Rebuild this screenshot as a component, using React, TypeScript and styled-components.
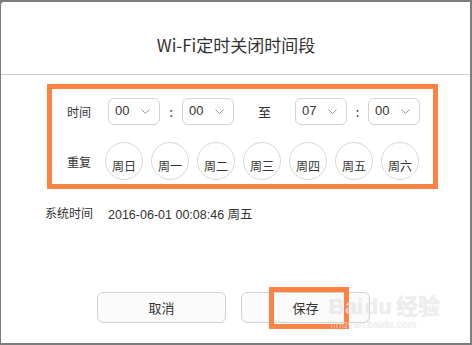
import React from 'react'
import styled, { createGlobalStyle } from 'styled-components'

const GlobalStyle = createGlobalStyle`
  html, body {
    margin: 0;
    padding: 0;
    background: #7d7d7d;
  }
  body {
    font-family: "Liberation Sans", "Noto Sans CJK SC", sans-serif;
    color: #333;
  }
`

const days = ['周日', '周一', '周二', '周三', '周四', '周五', '周六']

const Chevron = () => (
  <svg width="9" height="5" viewBox="0 0 9 5">
    <path d="M0.5 0.5 L4.5 4.5 L8.5 0.5" fill="none" stroke="#9a9a9a" strokeWidth="1" />
  </svg>
)

const TimeSelect: React.FC<{ value: string }> = ({ value }) => (
  <SelectBox>
    <span>{value}</span>
    <Chevron />
  </SelectBox>
)

export default function App() {
  return (
    <>
      <GlobalStyle />
      <Dialog>
        <Header>
          <Title>Wi-Fi定时关闭时间段</Title>
        </Header>
        <Body>
          <Highlight>
            <Row>
              <Label>时间</Label>
              <TimeSelect value="00" />
              <Sep width={22}>:</Sep>
              <TimeSelect value="00" />
              <Sep width={61}>至</Sep>
              <TimeSelect value="07" />
              <Sep width={21}>:</Sep>
              <TimeSelect value="00" />
            </Row>
            <DayRow>
              <Label $w={38}>重复</Label>
              {days.map((d) => (
                <DayCircle key={d}>{d}</DayCircle>
              ))}
            </DayRow>
          </Highlight>
          <SystemTime>
            <span>系统时间</span>
            <TimeValue>2016-06-01 00:08:46 周五</TimeValue>
          </SystemTime>
          <Buttons>
            <Button>取消</Button>
            <Button>
              保存
              <Mark />
            </Button>
          </Buttons>
          <Watermark>
            <WmTop>Bai<WmDu>du</WmDu>经验</WmTop>
            <WmSub>jingyan.baidu.com</WmSub>
          </Watermark>
        </Body>
      </Dialog>
    </>
  )
}

const Dialog = styled.div`
  margin: 2px 2px 0 1px;
  height: 341px;
  background: #fff;
  border-top-left-radius: 3px;
  display: flex;
  flex-direction: column;
  font-family: "Noto Sans CJK SC", sans-serif;
`

const Header = styled.div`
  height: 73px;
  border-bottom: 1px solid #cfcfcf;
  display: flex;
  justify-content: center;
  align-items: flex-start;
  box-sizing: border-box;
`

const Title = styled.div`
  font-size: 17px;
  margin-top: 30px;
  color: #333;
  margin-left: 1px;
`

const Body = styled.div`
  position: relative;
  flex: 1;
  display: flex;
  flex-direction: column;
`

const Highlight = styled.div`
  margin: 9px 0 0 46px;
  width: 391px;
  height: 105px;
  box-sizing: border-box;
  border: 5px solid #fe8244;
  padding: 9px 0 0 15px;
  display: flex;
  flex-direction: column;
  gap: 17px;
`

const Row = styled.div`
  display: flex;
  align-items: center;
  height: 27px;
`

const DayRow = styled.div`
  display: flex;
  align-items: center;
  gap: 8px;
`

const Label = styled.div<{ $w?: number }>`
  width: ${(p) => (p.$w ? p.$w - 8 : 41)}px;
  font-size: 12px;
  color: #333;
  flex-shrink: 0;
`

const SelectBox = styled.div`
  width: 52px;
  height: 27px;
  box-sizing: border-box;
  border: 1px solid #d4d4d4;
  border-radius: 6px;
  display: flex;
  align-items: center;
  justify-content: space-between;
  padding: 0 9px 0 6px;
  font-family: "Liberation Sans", sans-serif;
  font-size: 13px;
  color: #333;
  span {
    margin-top: -3px;
  }
`

const Sep = styled.div<{ width: number }>`
  width: ${(p) => p.width}px;
  text-align: center;
  font-size: 13px;
  color: #333;
`

const DayCircle = styled.div`
  width: 38px;
  height: 38px;
  box-sizing: border-box;
  border: 1px solid #d8d8d8;
  border-radius: 50%;
  display: flex;
  justify-content: center;
  padding-top: 16px;
  font-size: 12px;
  line-height: 14px;
  color: #333;
  flex-shrink: 0;
`

const SystemTime = styled.div`
  margin: 15px 0 0 44px;
  display: flex;
  font-size: 12px;
  color: #333;
`

const TimeValue = styled.span`
  margin-left: 15px;
  font-family: "Liberation Sans", "Noto Sans CJK SC", sans-serif;
  font-size: 12.5px;
`

const Buttons = styled.div`
  margin-top: 69px;
  display: flex;
  justify-content: center;
  gap: 15px;
  padding-right: 4px;
`

const Button = styled.div`
  position: relative;
  width: 129px;
  height: 31px;
  box-sizing: border-box;
  border: 1px solid #d2d2d2;
  border-radius: 6px;
  background: #fbfbfb;
  display: flex;
  align-items: center;
  justify-content: center;
  font-size: 13px;
  color: #333;
`

const Mark = styled.div`
  position: absolute;
  left: 27px;
  top: -6px;
  width: 80px;
  height: 42px;
  box-sizing: border-box;
  border: 5px solid #fe8244;
`

const Watermark = styled.div`
  position: absolute;
  right: 30px;
  bottom: 13px;
  display: flex;
  flex-direction: column;
  align-items: flex-start;
  color: rgba(255, 255, 255, 0.6);
  text-shadow: 0 0 1px rgba(0, 0, 0, 0.18);
  pointer-events: none;
`

const WmTop = styled.div`
  font-family: "Liberation Sans", "Noto Sans CJK SC", sans-serif;
  font-size: 22px;
  font-weight: bold;
  line-height: 24px;
`

const WmDu = styled.span`
  margin: 0 4px 0 2px;
`

const WmSub = styled.div`
  font-family: "Liberation Sans", sans-serif;
  font-size: 10px;
  margin-left: 2px;
  letter-spacing: 0.3px;
`
